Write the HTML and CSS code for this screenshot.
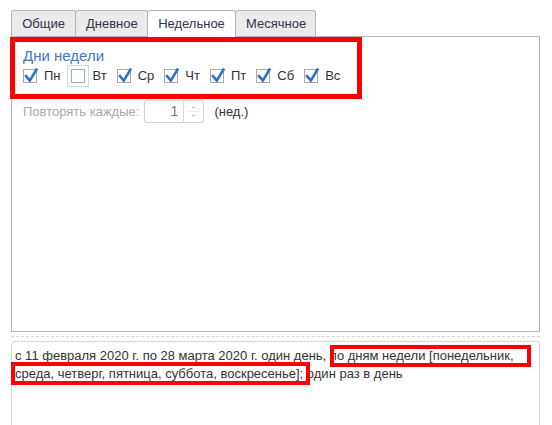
FILE: index.html
```html
<!DOCTYPE html>
<html lang="ru">
<head>
<meta charset="utf-8">
<link rel="stylesheet" href="styles.css">
</head>
<body>
<div class="page">
  <div class="tabs">
    <div class="tab">Общие</div>
    <div class="tab">Дневное</div>
    <div class="tab active">Недельное</div>
    <div class="tab">Месячное</div>
  </div>
  <div class="panel">
    <div class="group-title">Дни недели</div>
    <div class="days">
      <label class="day"><span class="box checked"><svg viewBox="0 0 16 16"><path d="M3 8.2 L6.8 12.6 L13.4 1.6"/></svg></span>Пн</label>
      <label class="day"><span class="focus"><span class="box"></span></span>Вт</label>
      <label class="day"><span class="box checked"><svg viewBox="0 0 16 16"><path d="M3 8.2 L6.8 12.6 L13.4 1.6"/></svg></span>Ср</label>
      <label class="day"><span class="box checked"><svg viewBox="0 0 16 16"><path d="M3 8.2 L6.8 12.6 L13.4 1.6"/></svg></span>Чт</label>
      <label class="day"><span class="box checked"><svg viewBox="0 0 16 16"><path d="M3 8.2 L6.8 12.6 L13.4 1.6"/></svg></span>Пт</label>
      <label class="day"><span class="box checked"><svg viewBox="0 0 16 16"><path d="M3 8.2 L6.8 12.6 L13.4 1.6"/></svg></span>Сб</label>
      <label class="day"><span class="box checked"><svg viewBox="0 0 16 16"><path d="M3 8.2 L6.8 12.6 L13.4 1.6"/></svg></span>Вс</label>
    </div>
    <div class="repeat">
      <span class="repeat-label">Повторять каждые:</span>
      <div class="spin">
        <span class="spin-value">1</span>
        <span class="spin-btns">
          <svg viewBox="0 0 20 22"><path d="M8.5 7 L10 5.5 L11.5 7 Z M8.5 15 L10 16.5 L11.5 15 Z"/><path class="mid" d="M3 11 H17"/></svg>
        </span>
      </div>
      <span class="unit">(нед.)</span>
    </div>
  </div>
  <div class="sep"></div>
  <div class="summary">с 11 февраля 2020 г. по 28 марта 2020 г. один день, по дням недели [понедельник, среда, четверг, пятница, суббота, воскресенье]; один раз в день</div>
</div>
<div class="mark mark-days"></div>
<div class="mark mark-line1"></div>
<div class="mark mark-line2"></div>
</body>
</html>
```

FILE: styles.css
```css
html, body {
  margin: 0;
  padding: 0;
  background: #fff;
}
body {
  position: relative;
  width: 552px;
  height: 425px;
  overflow: hidden;
  font-family: "Liberation Sans", Arial, sans-serif;
  font-size: 13px;
  color: #333;
}
.page {
  padding: 10px 12px 0 11px;
}
.tabs {
  display: flex;
  height: 26px;
  position: relative;
  z-index: 1;
}
.tab {
  box-sizing: border-box;
  height: 26px;
  line-height: 25px;
  padding: 0 10px;
  text-align: center;
  background: #ebebeb;
  border: 1px solid #b4b4b4;
  border-bottom: none;
  border-radius: 3px 3px 0 0;
  margin-right: -1px;
  color: #33334a;
}
.tab:nth-child(1) { width: 65px; }
.tab:nth-child(2) { width: 73px; }
.tab:nth-child(3) { width: 89px; }
.tab:nth-child(4) { width: 81px; }
.tab.active {
  background: #fff;
  height: 27px;
}
.panel {
  box-sizing: border-box;
  height: 296px;
  border: 1px solid #b4b4b4;
  padding: 10px 0 0 10px;
}
.group-title {
  font-size: 15px;
  line-height: 18px;
  color: #4279bd;
  margin-left: 1px;
}
.days {
  display: flex;
  align-items: center;
  height: 22px;
  margin-left: 1px;
}
.day {
  display: flex;
  align-items: center;
  margin-right: 10px;
  line-height: 16px;
}
.box {
  position: relative;
  box-sizing: border-box;
  width: 14px;
  height: 14px;
  border: 1px solid #a8a8a8;
  background: #fff;
  margin-right: 7px;
  flex: none;
}
.box svg {
  position: absolute;
  left: -1px;
  top: -2px;
  width: 16px;
  height: 16px;
  overflow: visible;
}
.box svg path {
  fill: none;
  stroke: #2f74c0;
  stroke-width: 2.6;
  stroke-linecap: square;
  stroke-linejoin: miter;
}
.focus {
  box-sizing: border-box;
  display: flex;
  align-items: center;
  justify-content: center;
  width: 22px;
  height: 22px;
  border: 1px solid #c6dcf1;
  margin-left: -4px;
  margin-right: 4px;
}
.focus .box {
  margin-right: 0;
}
.repeat {
  display: flex;
  align-items: center;
  margin-top: 13px;
  margin-left: 1px;
}
.repeat-label {
  color: #a9a9a9;
  margin-right: 5px;
}
.spin {
  box-sizing: border-box;
  display: flex;
  width: 60px;
  height: 23px;
  border: 1px solid #d2d2d2;
  border-radius: 2px;
}
.spin-value {
  flex: 1;
  text-align: right;
  line-height: 21px;
  padding-right: 5px;
  color: #777;
  font-size: 14px;
}
.spin-btns {
  width: 19px;
  border-left: 1px solid #dcdcdc;
  display: flex;
}
.spin-btns svg {
  width: 19px;
  height: 21px;
}
.spin-btns svg path {
  fill: #9a9a9a;
}
.spin-btns svg path.mid {
  fill: none;
  stroke: #ececec;
  stroke-width: 1;
}
.unit {
  margin-left: 10px;
  color: #333;
}
.sep {
  height: 0;
  margin-top: 4px;
  border-top: 1px dashed #d2d2d2;
}
.summary {
  box-sizing: border-box;
  margin-top: 4px;
  height: 100px;
  border: 1px solid #d4d4d4;
  border-radius: 3px;
  padding: 5px 3px 0 3px;
  line-height: 18px;
  color: #333;
}
.mark {
  position: absolute;
  box-sizing: border-box;
  border: 4px solid #ff0000;
  pointer-events: none;
}
.mark-days {
  left: 10px;
  top: 37px;
  width: 352px;
  height: 62px;
  border-width: 5px;
}
.mark-line1 {
  left: 330px;
  top: 345px;
  width: 201px;
  height: 22px;
}
.mark-line2 {
  left: 11px;
  top: 362px;
  width: 299px;
  height: 23px;
}
```
